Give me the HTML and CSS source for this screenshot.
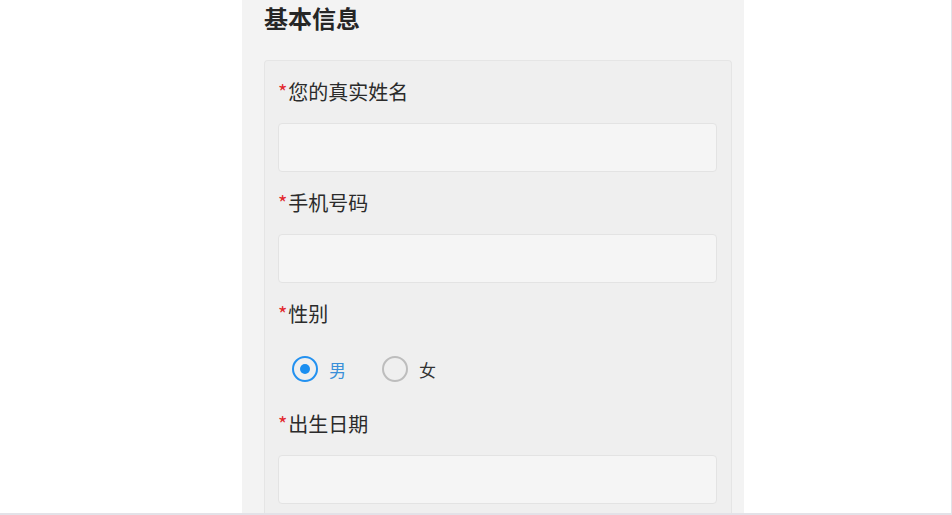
FILE: index.html
```html
<!DOCTYPE html>
<html lang="zh-CN">
<head>
    <meta charset="UTF-8">
    <meta name="viewport" content="width=device-width, initial-scale=1.0">
    <title>基本信息</title>
    <link rel="stylesheet" href="styles.css">
</head>
<body>
    <div class="page">
        <div class="panel">
            <h1 class="title">基本信息</h1>
            <div class="card">
                <div class="field">
                    <label class="label"><span class="req">*</span>您的真实姓名</label>
                    <input class="input" type="text">
                </div>
                <div class="field">
                    <label class="label"><span class="req">*</span>手机号码</label>
                    <input class="input" type="tel">
                </div>
                <div class="field">
                    <label class="label"><span class="req">*</span>性别</label>
                    <div class="radios">
                        <span class="radio checked"><span class="dot"></span>男</span>
                        <span class="radio"><span class="dot"></span>女</span>
                    </div>
                </div>
                <div class="field">
                    <label class="label"><span class="req">*</span>出生日期</label>
                    <input class="input" type="text">
                </div>
            </div>
        </div>
    </div>
</body>
</html>
```

FILE: styles.css
```css
html, body {
    margin: 0;
    padding: 0;
    background-color: #fff;
    font-family: "Noto Sans CJK SC", "Noto Sans", sans-serif;
}

.page {
    width: 951px;
    height: 513px;
    border-right: 1px solid #e3e2e8;
    border-bottom: 2px solid #e3e2e8;
    overflow: hidden;
}

.panel {
    margin-left: 242px;
    width: 502px;
    height: 100%;
    background-color: #f3f3f3;
    box-sizing: border-box;
    padding-left: 22px;
    padding-right: 12px;
}

.title {
    margin: 0 0 24px 0;
    font-size: 24px;
    line-height: 36px;
    font-weight: bold;
    color: #262626;
}

.card {
    background-color: #efefef;
    border: 1px solid #e5e5e5;
    border-bottom: none;
    border-radius: 4px 4px 0 0;
    padding: 0 14px 0 13px;
    height: 460px;
}

.label {
    display: block;
    height: 62px;
    line-height: 62px;
    font-size: 20px;
    color: #2b2b2b;
    overflow: hidden;
}

.req {
    color: #e2272c;
    font-size: 20px;
    line-height: 1;
    margin-right: 1px;
}

.input {
    display: block;
    width: 100%;
    height: 49px;
    box-sizing: border-box;
    background-color: #f5f5f5;
    border: 1px solid #e3e3e3;
    border-radius: 4px;
    margin: 0;
}

.radios {
    display: flex;
    align-items: center;
    height: 48px;
    padding-left: 14px;
    gap: 36px;
}

.radio {
    display: flex;
    align-items: center;
    gap: 11px;
    font-size: 17px;
    color: #333;
}

.dot {
    width: 26px;
    height: 26px;
    box-sizing: border-box;
    border: 2px solid #bdbdbd;
    border-radius: 50%;
    display: flex;
    align-items: center;
    justify-content: center;
}

.radio.checked {
    color: #3a8fd9;
}

.radio.checked .dot {
    border-color: #2391f0;
}

.radio.checked .dot::after {
    content: "";
    width: 10px;
    height: 10px;
    border-radius: 50%;
    background-color: #1a8ef0;
}
```
